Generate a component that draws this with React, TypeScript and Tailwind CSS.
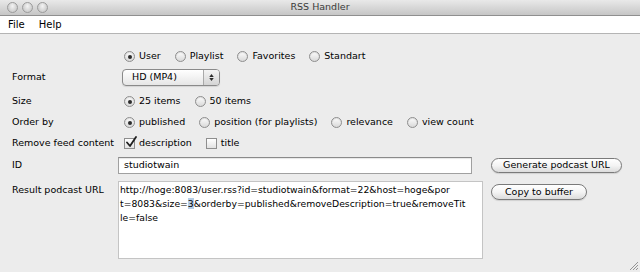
import type { ReactNode } from "react";

const Radio = ({ checked = false }: { checked?: boolean }) => (
  <span className="flex h-[11px] w-[11px] shrink-0 items-center justify-center rounded-full border border-[#8e8e8e] bg-linear-to-b from-[#fdfdfd] to-[#d9d9d9] shadow-[inset_0_1px_1px_rgba(0,0,0,0.12)]">
    {checked && <span className="h-[4px] w-[4px] rounded-full bg-[#2b2b2b]" />}
  </span>
);

const Check = ({ checked = false }: { checked?: boolean }) => (
  <span className="relative flex h-[11px] w-[11px] shrink-0 border border-[#8e8e8e] bg-linear-to-b from-white to-[#e2e2e2]">
    {checked && (
      <svg
        viewBox="0 0 12 12"
        className="absolute -top-[3px] left-[0px] h-[12px] w-[12px]"
      >
        <path
          d="M2 6.5 L5 10 L11 1"
          fill="none"
          stroke="#1f1f1f"
          strokeWidth="1.8"
          strokeLinecap="round"
          strokeLinejoin="round"
        />
      </svg>
    )}
  </span>
);

const Option = ({
  checked,
  label,
  box,
}: {
  checked?: boolean;
  label: string;
  box?: boolean;
}) => (
  <label className="mr-[14px] flex items-center gap-[4px] whitespace-nowrap">
    {box ? <Check checked={checked} /> : <Radio checked={checked} />}
    <span>{label}</span>
  </label>
);

const Row = ({
  label,
  children,
  className = "",
}: {
  label?: string;
  children: ReactNode;
  className?: string;
}) => (
  <div className={"flex h-[21px] items-center pl-[12px] " + className}>
    <div className="w-[106px] shrink-0 whitespace-nowrap">{label}</div>
    {children}
  </div>
);

const Button = ({ text, w }: { text: string; w: string }) => (
  <div
    className={
      "flex h-[15px] items-center justify-center whitespace-nowrap rounded-full border border-[#7a7a7a] bg-linear-to-b from-white via-[#f4f4f4] to-[#dcdcdc] text-[9.5px] shadow-[0_1px_1px_rgba(0,0,0,0.12)] " +
      w
    }
  >
    {text}
  </div>
);

export default function App() {
  return (
    <div className="flex h-[272px] w-[640px] flex-col overflow-hidden bg-[#ececec] font-['DejaVu_Sans',sans-serif] text-[9.5px] text-black">
      {/* title bar */}
      <div className="relative flex h-[16px] shrink-0 items-center justify-center border-b border-[#8f8f8f] bg-linear-to-b from-[#e9e9e9] to-[#c6c6c6]">
        <div className="absolute left-[7px] top-[2px] flex gap-[4px]">
          {[0, 1, 2].map((i) => (
            <span
              key={i}
              className="h-[11px] w-[11px] rounded-full border border-[#9b9b9b] bg-radial-[at_50%_35%] from-[#f4f4f4] to-[#bdbdbd]"
            />
          ))}
        </div>
        <span className="text-[9.5px] text-[#3a3a3a]">RSS Handler</span>
      </div>

      {/* menu bar */}
      <div className="flex h-[18px] shrink-0 items-center gap-[14px] border-b border-[#b4b4b4] bg-white pl-[8px] text-[10px]">
        <span>File</span>
        <span>Help</span>
      </div>

      <div className="relative flex flex-1 flex-col pt-[12px]">
        <Row>
          <div className="ml-[6px] flex">
            <Option checked label="User" />
            <Option label="Playlist" />
            <Option label="Favorites" />
            <Option label="Standart" />
          </div>
        </Row>

        <Row label="Format">
          <div className="ml-[4px] flex h-[17px] w-[98px] overflow-hidden rounded-[4px] border border-[#8a8a8a] bg-linear-to-b from-white to-[#e6e6e6] shadow-[0_1px_1px_rgba(0,0,0,0.1)]">
            <div className="flex flex-1 items-center pl-[9px]">HD (MP4)</div>
            <div className="flex w-[16px] flex-col items-center justify-center gap-[1px] border-l border-[#a9a9a9] bg-linear-to-b from-[#f4f4f4] to-[#d4d4d4]">
              <svg viewBox="0 0 6 4" className="h-[3px] w-[5px]">
                <path d="M0 4 L3 0 L6 4 Z" fill="#2b2b2b" />
              </svg>
              <svg viewBox="0 0 6 4" className="h-[3px] w-[5px]">
                <path d="M0 0 L6 0 L3 4 Z" fill="#2b2b2b" />
              </svg>
            </div>
          </div>
        </Row>

        <Row label="Size" className="mt-[3px]">
          <div className="ml-[6px] flex">
            <Option checked label="25 items" />
            <Option label="50 items" />
          </div>
        </Row>

        <Row label="Order by">
          <div className="ml-[6px] flex">
            <Option checked label="published" />
            <Option label="position (for playlists)" />
            <Option label="relevance" />
            <Option label="view count" />
          </div>
        </Row>

        <Row label="Remove feed content">
          <div className="ml-[6px] flex">
            <Option box checked label="description" />
            <Option box label="title" />
          </div>
        </Row>

        <Row label="ID" className="mt-[1px]">
          <div className="flex h-[17px] w-[354px] items-center border border-[#a0a0a0] border-t-[#8a8a8a] bg-white pl-[5px] shadow-[inset_0_1px_1px_rgba(0,0,0,0.1)]">
            studiotwain
          </div>
          <div className="ml-[19px]">
            <Button text="Generate podcast URL" w="w-[131px]" />
          </div>
        </Row>

        <div className="mt-[5px] flex pl-[12px]">
          <div className="w-[106px] shrink-0 whitespace-nowrap pt-[2px] leading-[14px]">
            Result podcast URL
          </div>
          <div className="h-[78px] w-[365px] whitespace-nowrap border border-[#c4c4c4] bg-white pl-[1px] pt-[1px] text-[9.25px] leading-[14px]">
            <div>
              http://hoge:8083/user.rss?id=studiotwain&amp;format=22&amp;host=hoge&amp;por
            </div>
            <div>
              t=8083&amp;size=<span className="bg-[#b6cde6]">3</span>
              &amp;orderby=published&amp;removeDescription=true&amp;removeTit
            </div>
            <div>le=false</div>
          </div>
          <div className="ml-[8px] mt-[3px]">
            <Button text="Copy to buffer" w="w-[96px] h-[16px]" />
          </div>
        </div>

        {/* resize grip */}
        <svg
          viewBox="0 0 10 10"
          className="absolute bottom-[2px] right-[2px] h-[10px] w-[10px]"
        >
          <path
            d="M10 2 L2 10 M10 5 L5 10 M10 8 L8 10"
            stroke="#8a8a8a"
            strokeWidth="0.9"
          />
        </svg>
      </div>
    </div>
  );
}
